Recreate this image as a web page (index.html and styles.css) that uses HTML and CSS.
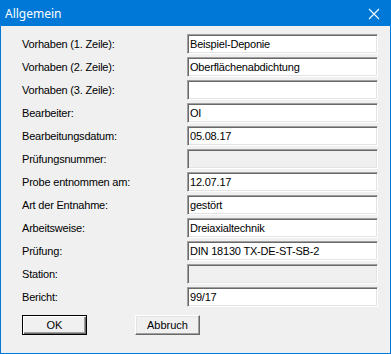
FILE: index.html
```html
<!DOCTYPE html>
<html lang="de">
<head>
    <meta charset="UTF-8">
    <title>Allgemein</title>
    <link rel="stylesheet" href="styles.css">
</head>
<body>

<div class="dialog">
    <div class="titlebar">
        <span class="title">Allgemein</span>
        <svg class="close" width="12" height="12" viewBox="0 0 12 12">
            <path d="M1 1 L11 11 M11 1 L1 11" stroke="#fff" stroke-width="1.1" fill="none"/>
        </svg>
    </div>

    <form class="fields">
        <label>Vorhaben (1. Zeile):</label>
        <input type="text" value="Beispiel-Deponie">

        <label>Vorhaben (2. Zeile):</label>
        <input type="text" value="Oberflächenabdichtung">

        <label>Vorhaben (3. Zeile):</label>
        <input type="text" value="">

        <label>Bearbeiter:</label>
        <input type="text" value="OI">

        <label>Bearbeitungsdatum:</label>
        <input type="text" value="05.08.17">

        <label>Prüfungsnummer:</label>
        <input type="text" value="" disabled>

        <label>Probe entnommen am:</label>
        <input type="text" value="12.07.17">

        <label>Art der Entnahme:</label>
        <input type="text" value="gestört">

        <label>Arbeitsweise:</label>
        <input type="text" value="Dreiaxialtechnik">

        <label>Prüfung:</label>
        <input type="text" value="DIN 18130 TX-DE-ST-SB-2">

        <label>Station:</label>
        <input type="text" value="" disabled>

        <label>Bericht:</label>
        <input type="text" value="99/17">
    </form>

    <div class="buttons">
        <button type="button" class="default">OK</button>
        <button type="button">Abbruch</button>
    </div>
</div>

</body>
</html>
```

FILE: styles.css
```css
body { margin: 0; background-color: #f0f0f0; font-family: "Liberation Sans", Arial, sans-serif; }
.dialog { width: 391px; height: 354px; box-sizing: border-box; border: 1px solid #0078d7; background-color: #f0f0f0; }
.titlebar { height: 25px; background-color: #0078d7; display: flex; align-items: center; justify-content: space-between; padding: 0 10px 0 4px; }
.title { color: #ffffff; font-family: "Noto Sans", "Open Sans", sans-serif; font-size: 12px; }
.close { display: block; }
.fields { display: grid; grid-template-columns: 165px 191px; grid-auto-rows: 20px; row-gap: 3px; align-items: center; padding: 8px 0 0 21px; }
.fields label { font-size: 11px; letter-spacing: -0.2px; color: #000000; }
.fields input { height: 20px; box-sizing: border-box; margin: 0; padding: 0 2px; font-family: "Liberation Sans", Arial, sans-serif; font-size: 11px; letter-spacing: -0.2px; color: #000000; background-color: #ffffff; border-style: solid; border-width: 1px; border-color: #a0a0a0 #ffffff #ffffff #a0a0a0; box-shadow: inset 1px 1px 0 #696969, inset -1px -1px 0 #e3e3e3; outline: none; }
.fields input:disabled { background-color: #f0f0f0; }
.buttons { display: flex; gap: 48px; padding: 8px 0 0 21px; }
.buttons button { width: 65px; height: 20px; box-sizing: border-box; padding: 0; font-family: "Liberation Sans", Arial, sans-serif; font-size: 11px; color: #000000; background-color: #f0f0f0; border-style: solid; border-width: 1px; border-color: #ffffff #696969 #696969 #ffffff; box-shadow: inset -1px -1px 0 #a0a0a0, inset 1px 1px 0 #e3e3e3; }
.buttons button.default { border-color: #000000; box-shadow: inset 1px 1px 0 #ffffff, inset -1px -1px 0 #696969, inset -2px -2px 0 #a0a0a0; }
```
